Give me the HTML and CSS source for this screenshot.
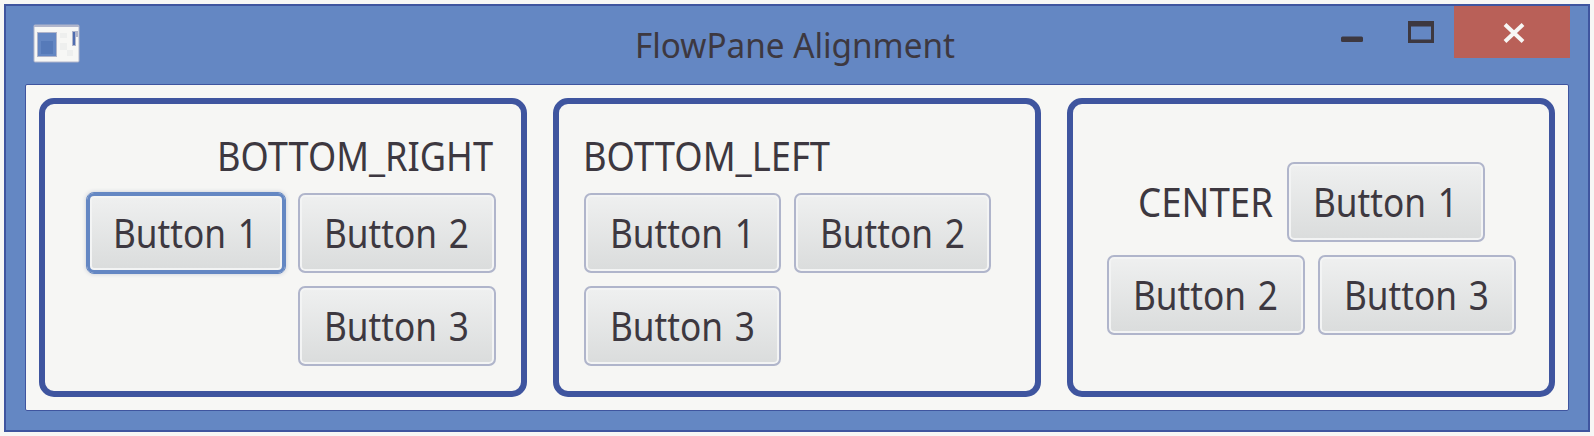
FILE: index.html
```html
<!DOCTYPE html>
<html lang="en">
<head>
<meta charset="utf-8">
<title>FlowPane Alignment</title>
<link rel="stylesheet" href="styles.css">
</head>
<body>
<div class="window">
  <header class="titlebar">
    <svg class="app-icon" width="48" height="40" viewBox="0 0 48 40">
      <rect x="1" y="1" width="45" height="37" rx="1" fill="#f7f7f5" stroke="#b0b5cb" stroke-width="1"/>
      <rect x="1" y="1" width="45" height="2" fill="#b0b5cb"/>
      <rect x="4.5" y="8.5" width="19" height="24" fill="#6487c3" stroke="#b0b5cb"/>
      <path d="M8 17h12v13h-12z" fill="#567ab9"/>
      <path d="M27 9h7v5h-7zM27 19h7v7h-7zM34 26h6v6h-6z" fill="#eeefee"/>
      <path d="M39 7h6v6h-2v9h-4z" fill="#b0b5cb"/>
      <path d="M41 8v13" stroke="#4f6db0" stroke-width="2"/>
    </svg>
    <svg class="title" width="330" height="48" viewBox="0 0 330 48"><text x="3" y="35" textLength="320" lengthAdjust="spacingAndGlyphs">FlowPane Alignment</text></svg>
    <div class="controls">
      <svg class="minimize" width="22" height="6" viewBox="0 0 22 6"><rect x="0" y="0.5" width="22" height="5.5" rx="1.5" fill="#3d3840"/></svg>
      <svg class="maximize" width="26" height="22" viewBox="0 0 26 22"><path fill="#3d3840" fill-rule="evenodd" d="M0 0H26V22H0ZM3 5.5V18.5H23V5.5Z"/></svg>
      <div class="close"><svg width="22" height="20" viewBox="0 0 22 20"><path d="M2 1.5L20 18.5M20 1.5L2 18.5" stroke="#f7f7f5" stroke-width="4"/></svg></div>
    </div>
  </header>
  <main class="content">
    <section class="pane bottom-right">
      <div class="row"><svg class="label" width="283" height="46"><text x="4" y="37" textLength="276" lengthAdjust="spacingAndGlyphs">BOTTOM_RIGHT</text></svg></div>
      <div class="row">
        <button class="btn focused"><svg width="156" height="50"><text x="5" y="40" textLength="145" lengthAdjust="spacingAndGlyphs">Button 1</text></svg></button>
        <button class="btn"><svg width="156" height="50"><text x="5" y="40" textLength="145" lengthAdjust="spacingAndGlyphs">Button 2</text></svg></button>
      </div>
      <div class="row"><button class="btn"><svg width="156" height="50"><text x="5" y="40" textLength="145" lengthAdjust="spacingAndGlyphs">Button 3</text></svg></button></div>
    </section>
    <section class="pane bottom-left">
      <div class="row"><svg class="label" width="260" height="46"><text x="-1" y="37" textLength="247" lengthAdjust="spacingAndGlyphs">BOTTOM_LEFT</text></svg></div>
      <div class="row">
        <button class="btn"><svg width="156" height="50"><text x="5" y="40" textLength="145" lengthAdjust="spacingAndGlyphs">Button 1</text></svg></button>
        <button class="btn"><svg width="156" height="50"><text x="5" y="40" textLength="145" lengthAdjust="spacingAndGlyphs">Button 2</text></svg></button>
      </div>
      <div class="row"><button class="btn"><svg width="156" height="50"><text x="5" y="40" textLength="145" lengthAdjust="spacingAndGlyphs">Button 3</text></svg></button></div>
    </section>
    <section class="pane center">
      <div class="row">
        <svg class="label" width="137" height="46"><text x="1" y="38" textLength="135" lengthAdjust="spacingAndGlyphs">CENTER</text></svg>
        <button class="btn"><svg width="156" height="50"><text x="5" y="40" textLength="145" lengthAdjust="spacingAndGlyphs">Button 1</text></svg></button>
      </div>
      <div class="row">
        <button class="btn"><svg width="156" height="50"><text x="5" y="40" textLength="145" lengthAdjust="spacingAndGlyphs">Button 2</text></svg></button>
        <button class="btn"><svg width="156" height="50"><text x="5" y="40" textLength="145" lengthAdjust="spacingAndGlyphs">Button 3</text></svg></button>
      </div>
    </section>
  </main>
</div>
</body>
</html>
```

FILE: styles.css
```css
* { box-sizing: border-box; }
body {
  margin: 0;
  padding: 4px;
  height: 436px;
  background: #f7f7f5;
  font-family: "Noto Sans", "Open Sans", sans-serif;
}
svg { display: block; overflow: visible; flex: none; }
text { font-family: "Noto Sans", "Open Sans", sans-serif; fill: #3d3840; }
.window {
  width: 1586px;
  height: 428px;
  display: flex;
  flex-direction: column;
  padding: 0 19px 19px;
  background: #6487c3;
  border: 2px solid #3f559f;
}
.titlebar {
  height: 78px;
  flex: none;
  display: flex;
  align-items: flex-start;
}
.app-icon { margin: 18px 0 0 8px; }
.title { margin: 17px 0 0 551px; font-size: 35px; }
.controls { display: flex; margin-left: auto; }
.minimize { margin-top: 30px; }
.maximize { margin: 15px 20px 0 45px; }
.close {
  width: 116px;
  height: 52px;
  display: flex;
  justify-content: center;
  padding: 17px 0 0 3px;
  margin-right: -1px;
  background: #b96058;
}
.content {
  flex: 1;
  display: grid;
  grid-template-columns: repeat(3, 1fr);
  gap: 26px;
  padding: 13px;
  background: #f7f7f5;
  border: 1px solid #3f559f;
  border-radius: 2px;
}
.pane {
  display: flex;
  flex-direction: column;
  justify-content: flex-end;
  gap: 13px;
  padding: 25px;
  border: 6px solid #3f559f;
  border-radius: 15px;
  background: #f6f6f4;
}
.row { display: flex; align-items: center; gap: 13px; }
.bottom-right .row { justify-content: flex-end; }
.center { justify-content: center; padding-top: 27px; }
.center .row { justify-content: center; }
.label { font-size: 40px; }
.btn {
  width: 198px;
  height: 80px;
  display: flex;
  align-items: center;
  justify-content: center;
  padding: 0;
  font-size: 40px;
  word-spacing: 3px;
  border: 2px solid #b0b5cb;
  border-radius: 7px;
  background: linear-gradient(#eff0f0, #dadcdc);
  box-shadow: inset 0 0 0 2px #f3f4f4;
}
.focused {
  border: 3px solid #6487c3;
  outline: 1px solid #6487c3;
  outline-offset: 0;
  box-shadow: inset 0 0 0 2px #f3f4f4, 0 0 4px 1px #c5cad6;
}
.bottom-left .btn { width: 197px; }
```
